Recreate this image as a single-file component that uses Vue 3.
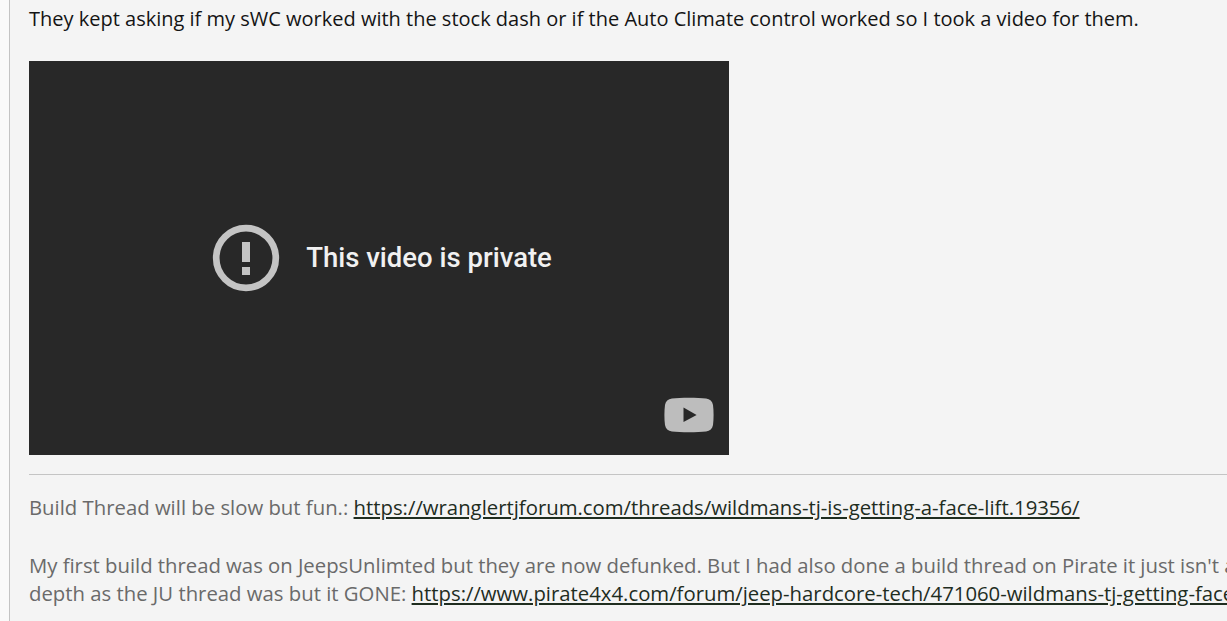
<script setup>
const videoMessage = 'This video is private'
const buildThreadUrl = 'https://wranglertjforum.com/threads/wildmans-tj-is-getting-a-face-lift.19356/'
const pirateUrl = 'https://www.pirate4x4.com/forum/jeep-hardcore-tech/471060-wildmans-tj-getting-face-lift.html'
</script>

<template>
  <div class="page">
    <div class="post">
      <p class="intro">They kept asking if my sWC worked with the stock dash or if the Auto Climate control worked so I took a video for them.</p>

      <div class="video">
        <div class="notice">
          <svg class="alert" width="68" height="68" viewBox="0 0 68 68">
            <circle cx="34" cy="34" r="29.8" fill="none" stroke="#c4c4c4" stroke-width="6.700" />
            <rect x="30" y="18" width="8" height="20" fill="#c4c4c4" />
            <rect x="30" y="43" width="8" height="8" fill="#c4c4c4" />
          </svg>
          <span class="message">{{ videoMessage }}</span>
        </div>
        <svg class="yt-logo" width="50" height="36" viewBox="0 0 50 36">
          <path d="M8 1.500C16 .6 34 .6 42 1.500c4 .4 6.400 2.600 7 6.500.8 6 .8 14 0 20-.6 3.900-3 6.100-7 6.500-8 .9-26 .9-34 0-4-.4-6.400-2.600-7-6.500-.8-6-.8-14 0-20 .6-3.900 3-6.100 7-6.500z" fill="#bdbdbd" />
          <path d="M19.500 10.500v14.600L32.600 18z" fill="#282828" />
        </svg>
      </div>

      <div class="signature">
        <p>Build Thread will be slow but fun.: <a href="#">{{ buildThreadUrl }}</a></p>
        <p><span class="wide">My first build thread was on JeepsUnlimted but they are now defunked. But I had also done a build thread on Pirate it just isn't as in</span><br>depth as the JU thread was but it GONE: <a href="#">{{ pirateUrl }}</a></p>
      </div>
    </div>
  </div>
</template>

<style>
html,
body {
  margin: 0;
  overflow: hidden;
  background: #fafafa;
}
</style>

<style scoped>
.page {
  height: 621px;
  overflow: hidden;
  padding-left: 9px;
  font-family: "Open Sans", sans-serif;
  font-size: 20.32px;
  line-height: 28.5px;
}

.post {
  height: 100%;
  padding: 5px 0 0 19px;
  background: #f4f4f4;
  border-left: 1px solid #c4c4c4;
  white-space: nowrap;
}

.intro {
  margin: 0 0 27px;
  font-size: 20px;
  color: #141414;
}

.video {
  position: relative;
  width: 700px;
  height: 394px;
  background: #282828;
  display: flex;
  align-items: center;
  justify-content: center;
}

.notice {
  display: flex;
  align-items: center;
  gap: 26px;
  padding-left: 6px;
}

.message {
  padding-top: 2px;
  font-family: Roboto, sans-serif;
  font-size: 27.5px;
  font-weight: 500;
  color: #f1f1f1;
}

.yt-logo {
  position: absolute;
  right: 15px;
  bottom: 22px;
}

.signature {
  margin-top: 19px;
  padding-top: 18.5px;
  border-top: 1px solid #c4c4c4;
  color: #6a6a6a;
}

.signature p {
  margin: 0 0 29px;
}

.signature .wide {
  word-spacing: -0.08px;
}

.signature a {
  color: #1f2d1f;
  text-decoration: underline;
}
</style>
